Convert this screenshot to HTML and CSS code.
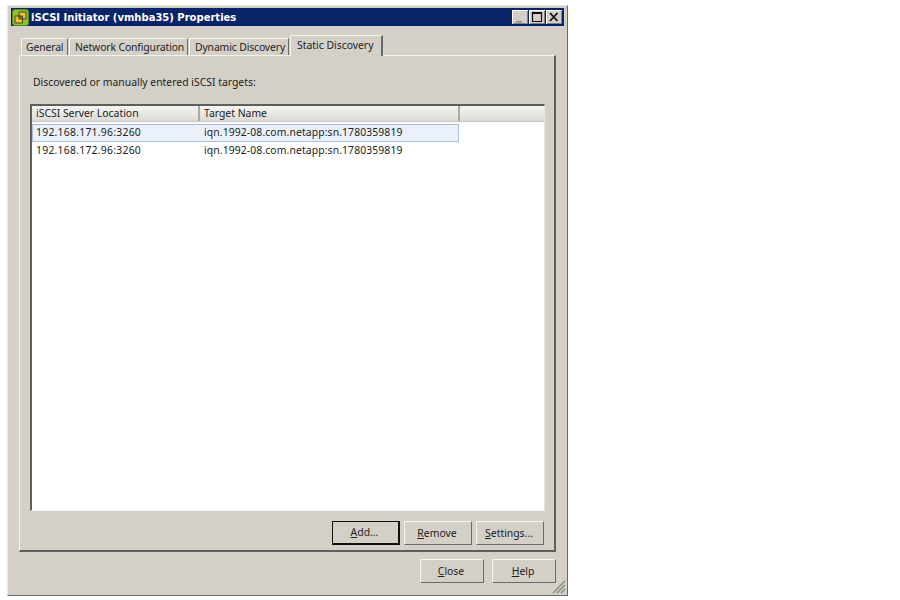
FILE: index.html
```html
<!DOCTYPE html>
<html lang="en">
<head>
<meta charset="utf-8">
<title>iSCSI Initiator (vmhba35) Properties</title>
<link rel="stylesheet" href="styles.css">
</head>
<body>
<div class="window">
  <div class="titlebar">
    <svg class="app-icon" width="17" height="17" viewBox="0 0 17 17">
      <rect x="0.5" y="0.5" width="16" height="16" rx="2.5" fill="#8fc031" stroke="#4f8a1a"/>
      <path d="M7 3h7v7h-3.5v4H3V7h4z" fill="#f0bd3c" stroke="#4a4a12"/>
      <path d="M7 7h3.5v3H7z" fill="#5e8f20" stroke="#4a4a12"/>
    </svg>
    <span class="title">iSCSI Initiator (vmhba35) Properties</span>
    <div class="controls">
      <span class="ctl"><svg width="16" height="14" viewBox="0 0 16 14"><path d="M4 11h6v1.5H4z" fill="#8a8a8a"/></svg></span>
      <span class="ctl"><svg width="16" height="14" viewBox="0 0 16 14"><path d="M3.5 2.5h9v9h-9z M3.5 3.5h9" fill="none" stroke="#111" stroke-width="1.2"/></svg></span>
      <span class="ctl"><svg width="16" height="14" viewBox="0 0 16 14"><path d="M4 3l7.5 8M11.5 3L4 11" fill="none" stroke="#111" stroke-width="1.8"/></svg></span>
    </div>
  </div>
  <div class="tabs">
    <div class="tab tab-general">General</div>
    <div class="tab tab-network">Network Configuration</div>
    <div class="tab tab-dynamic">Dynamic Discovery</div>
    <div class="tab active">Static Discovery</div>
  </div>
  <div class="panel">
    <p class="label">Discovered or manually entered iSCSI targets:</p>
    <div class="list">
      <div class="header">
        <div class="hcell col-a">iSCSI Server Location</div>
        <div class="hcell col-b">Target Name</div>
        <div class="hcell col-c"></div>
      </div>
      <div class="row selected">
        <div class="cell col-a">192.168.171.96:3260</div>
        <div class="cell col-b2">iqn.1992-08.com.netapp:sn.1780359819</div>
      </div>
      <div class="row">
        <div class="cell col-a">192.168.172.96:3260</div>
        <div class="cell col-b2">iqn.1992-08.com.netapp:sn.1780359819</div>
      </div>
    </div>
    <div class="panel-buttons">
      <button class="btn btn-default"><u>A</u>dd...</button>
      <button class="btn"><u>R</u>emove</button>
      <button class="btn"><u>S</u>ettings...</button>
    </div>
  </div>
  <div class="footer">
    <button class="btn btn-wide"><u>C</u>lose</button>
    <button class="btn btn-wide"><u>H</u>elp</button>
    <svg class="grip" width="14" height="14" viewBox="0 0 14 14">
      <path d="M1 13L13 1M5 13L13 5M9 13L13 9" stroke="#808080" stroke-width="1.2" fill="none"/>
    </svg>
  </div>
</div>
</body>
</html>
```
FILE: styles.css
```css
* { box-sizing: border-box; }
html, body { margin: 0; padding: 0; background: #fff; }
body { font-family: "Noto Sans", "DejaVu Sans", sans-serif; font-size: 10.4px; color: #111; height: 600px; overflow: hidden; }
.window {
  position: relative;
  width: 561px; height: 591px; margin: 5px 0 0 7px;
  background: #d4d0c8;
  border: 1px solid;
  border-color: #ece9e4 #6a6a6a #6a6a6a #ece9e4;
  padding: 2px 3px 0 3px;
}
.titlebar {
  height: 18px; background: #0a246a; display: flex; align-items: center; color: #fff;
  padding-right: 2px;
}
.app-icon { margin-left: 1px; flex: none; }
.title { font-family: "DejaVu Sans", sans-serif; font-weight: bold; font-size: 10px; margin-left: 2px; white-space: nowrap; }
.controls { margin-left: auto; display: flex; gap: 0; }
.ctl {
  width: 16px; height: 14px; background: #d4d0c8; display: block; margin-left: 1px;
  box-shadow: inset 1px 1px 0 #fff, inset -1px -1px 0 #808080;
}
.ctl svg { display: block; }
.tabs { display: flex; align-items: flex-end; height: 29px; padding-left: 10px; position: relative; z-index: 1; }
.tab {
  height: 17px; border-left: 1px solid #f4f2ee; border-top: 1px solid #f4f2ee; border-right: 1px solid #6a6a6a;
  line-height: 17px; padding-left: 4px; margin-right: 1px; white-space: nowrap; color: #222; letter-spacing: -0.13px;
}
.tab-general { width: 47px; }
.tab-network { width: 119px; padding-left: 5px; }
.tab-dynamic { width: 100px; padding-left: 5px; }
.tab.active { width: 93px; height: 21px; line-height: 18px; margin-bottom: -1px; background: #d4d0c8; padding-left: 6px; border-right-width: 2px; letter-spacing: 0; }
.panel {
  margin-left: 8px; width: 537px; height: 497px;
  border: 1px solid; border-color: #f4f2ee #5e5e5e #5e5e5e #f4f2ee;
  border-width: 1px 2px 2px 1px;
  padding: 19px 9px 0 10px;
}
.label { margin: 0 0 0 3px; height: 15px; line-height: 14px; color: #222; }
.list {
  margin-top: 14px; width: 515px; height: 407px; background: #fff;
  border: 1px solid; border-width: 2px 1px 1px 2px;
  border-color: #5e5e5e #e8e6e2 #f4f2ee #5e5e5e;
}
.header { display: flex; height: 16px; margin-bottom: 2px; background: linear-gradient(#f6f5f2, #dcdad6); border-bottom: 1px solid #c8c6c2; }
.hcell { height: 15px; line-height: 14px; padding-left: 4px; border-right: 2px solid #aaa8a4; color: #222; }
.col-a { width: 168px; }
.col-b { width: 260px; }
.hcell.col-c { flex: 1; border-right: 0; }
.row { display: flex; width: 427px; height: 18px; line-height: 15px; border: 1px solid transparent; color: #222; }
.row.selected { background: #ebf1fb; border-color: #a9bfdc; }
.cell { padding-left: 3px; white-space: nowrap; letter-spacing: 0.25px; }
.col-b2 { padding-left: 3px; letter-spacing: 0.1px; }
.panel-buttons { display: flex; justify-content: flex-end; gap: 4px; margin-top: 10px; padding-right: 1px; }
.btn {
  width: 68px; height: 24px; padding: 0 2px 1px 0; background: #d4d0c8; font: inherit; color: #222;
  border: 1px solid; border-color: #f6f4f0 #6a6a6a #6a6a6a #f6f4f0;
}
.btn-default { border: 1px solid #111; border-right-width: 2px; border-bottom-width: 2px; }
.footer { display: flex; justify-content: flex-end; gap: 8px; margin-top: 7px; padding-right: 8px; }
.btn-wide { width: 64px; padding-bottom: 0; }
.grip { position: absolute; right: 1px; bottom: 1px; }
```
